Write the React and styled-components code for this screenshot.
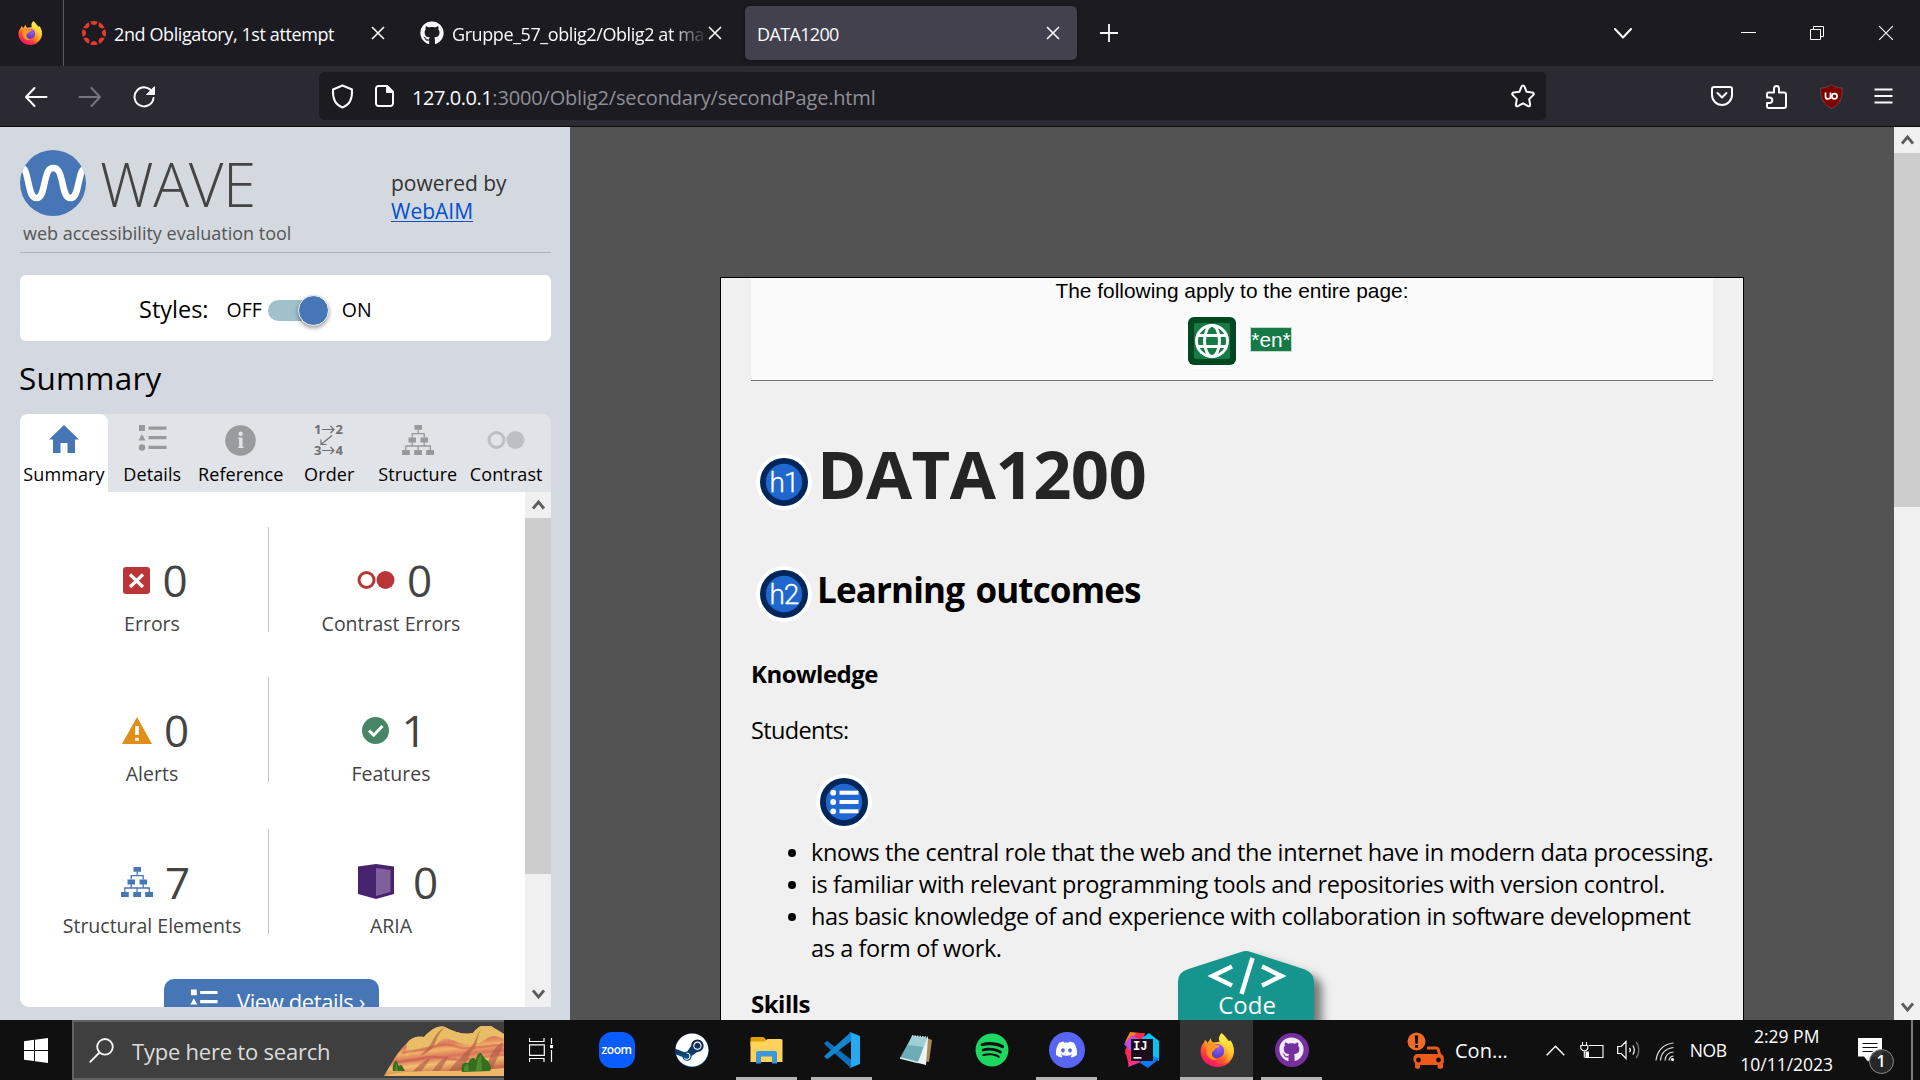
import React from 'react';
import styled, { createGlobalStyle, css } from 'styled-components';
import { FaGithub, FaDiscord, FaSteam, FaSpotify } from 'react-icons/fa';

const Global = createGlobalStyle`
  * { box-sizing: border-box; }
  body { margin: 0; overflow: hidden; font-family: "Open Sans", "Noto Sans", sans-serif; }
  svg { display: block; flex: none; }
`;

const Screen = styled.div`
  width: 1920px;
  height: 1080px;
  display: flex;
  flex-direction: column;
  overflow: hidden;
`;

const Label = styled.span`
  font-size: ${p => p.$size || 18}px;
  letter-spacing: ${p => p.$track || 0}px;
  white-space: nowrap;
`;

/* ---------- Tab strip ---------- */
const TabStrip = styled.div`
  height: 66px;
  background: #1c1b22;
  display: flex;
  align-items: center;
  color: #fbfbfe;
`;
const PinnedTab = styled.div`
  width: 64px;
  height: 66px;
  padding-left: 18px;
  display: flex;
  align-items: center;
  border-right: 1px solid #5b5b64;
`;
const BrowserTab = styled.div`
  width: ${p => p.$width}px;
  height: 54px;
  padding: 0 ${p => p.$right}px 0 ${p => p.$left}px;
  margin-right: ${p => p.$after || 0}px;
  display: flex;
  align-items: center;
  border-radius: 5px;
  ${p => p.$active && css`
    background: #42414d;
    box-shadow: 0 0 4px rgba(0, 0, 0, 0.4);
  `}
`;
const TabTitle = styled(Label)`
  flex: 1;
  margin-left: ${p => p.$indent || 0}px;
  padding-top: 1px;
  ${p => p.$fade && css`
    mask-image: linear-gradient(to right, #000 218px, transparent 256px);
  `}
`;
const NewTab = styled.div`
  margin-left: 23px;
`;
const WindowControls = styled.div`
  margin-left: auto;
  padding-right: 26px;
  display: flex;
  align-items: center;
`;
const ControlSlot = styled.div`
  margin-right: ${p => p.$gap}px;
`;

/* ---------- Navigation bar ---------- */
const NavBar = styled.div`
  height: 61px;
  background: #2b2a33;
  border-bottom: 1px solid #0c0c0d;
  display: flex;
  align-items: center;
  padding: 0 27px 0 24px;
`;
const NavButtons = styled.div`
  width: 296px;
  padding-top: 1px;
  display: flex;
  gap: 30px;
`;
const UrlField = styled.div`
  width: 1227px;
  height: 48px;
  margin-left: -1px;
  border-radius: 5px;
  background: #1c1b22;
  display: flex;
  align-items: center;
  padding: 0 11px 0 12px;
  color: #8f8f98;
`;
const UrlIcons = styled.div`
  display: flex;
  align-items: center;
  gap: 21px;
  width: 81px;
`;
const UrlText = styled(Label)`
  flex: 1;
  padding-top: 2px;
`;
const UrlHost = styled.span`
  color: #fbfbfe;
  letter-spacing: -0.45px;
`;
const Extensions = styled.div`
  flex: 1;
  display: flex;
  align-items: center;
  justify-content: space-between;
  padding-left: 164px;
`;

/* ---------- Content ---------- */
const Content = styled.div`
  height: 893px;
  display: flex;
  position: relative;
  background: #535353;
  overflow: hidden;
`;
const Sidebar = styled.aside`
  width: 570px;
  padding: 0 19px 13px 20px;
  background: #d4d8e0;
`;
const WaveHeader = styled.header`
  height: 126px;
  border-bottom: 1px solid #aeb4b8;
  display: flex;
  background: #d4d9e0;
`;
const Brand = styled.div`
  width: 371px;
  padding-top: 23px;
`;
const BrandRow = styled.div`
  display: flex;
  height: 66px;
  gap: 13px;
`;
const BrandName = styled.div`
  font-size: 60px;
  font-weight: 300;
  line-height: 68px;
  letter-spacing: -0.4px;
  color: #444;
`;
const Tagline = styled.div`
  margin: 5px 0 0 3px;
  font-size: 18px;
  line-height: 24px;
  color: #555;
`;
const PoweredBy = styled.div`
  padding-top: 42px;
  font-size: 21px;
  line-height: 28px;
  color: #333;
`;
const BlueLink = styled.div`
  color: #0050d0;
  text-decoration: underline;
  text-decoration-thickness: 1px;
  text-underline-offset: 2px;
`;
const StylesBox = styled.div`
  margin-top: 22px;
  height: 66px;
  border-radius: 6px;
  background: #fff;
  display: flex;
  align-items: center;
  padding: 2px 0 0 119px;
`;
const SwitchLabel = styled(Label)`
  margin-left: ${p => p.$before}px;
  padding-top: 1px;
`;
const Track = styled.div`
  width: 58px;
  height: 21px;
  margin: 2px 0 0 6px;
  border-radius: 11px;
  background: #a0c1cb;
  display: flex;
  justify-content: flex-end;
  align-items: center;
`;
const Knob = styled.div`
  flex: none;
  width: 31px;
  height: 31px;
  margin-right: -3px;
  border-radius: 50%;
  background: #4776b6;
  border: 1px solid #f4f4f4;
  box-shadow: 0 2px 4px rgba(0, 0, 0, 0.4);
`;
const SectionTitle = styled.h2`
  margin: 17px 0 16px -1px;
  font-size: 31.5px;
  font-weight: 400;
  line-height: 40px;
  letter-spacing: 0.2px;
`;
const Tabs = styled.div`
  height: 78px;
  display: grid;
  grid-template-columns: 88px repeat(5, 88.5px);
  background: #e0e3e7;
  border-radius: 9px 9px 0 0;
`;
const PanelTab = styled.div`
  padding-top: 10px;
  display: flex;
  flex-direction: column;
  align-items: center;
  font-size: 18px;
  line-height: 24px;
  letter-spacing: 0.1px;
  border-radius: 8px 8px 0 0;
  background: ${p => (p.$active ? '#fff' : 'transparent')};
`;
const TabIcon = styled.div`
  height: 32px;
  margin-bottom: 6px;
  padding-bottom: ${p => p.$lift || 0}px;
  display: flex;
  align-items: center;
`;
const SummaryBody = styled.div`
  height: 515px;
  display: flex;
  background: #fff;
  border-radius: 0 0 0 9px;
  overflow: hidden;
`;
const Counts = styled.div`
  flex: 1;
  height: 515px;
  overflow: hidden;
  padding-top: 35px;
  color: #444;
`;
const CountRow = styled.div`
  height: 105px;
  margin-bottom: ${p => p.$after}px;
  display: grid;
  grid-template-columns: 249px 244px;
`;
const CountCell = styled.div`
  height: 105px;
  padding: 23px 0 0 ${p => (p.$first ? 16 : 0)}px;
  border-right: ${p => (p.$first ? '1px solid #c4c4c4' : 'none')};
  display: flex;
  flex-direction: column;
  align-items: center;
`;
const CountValue = styled.div`
  height: 60px;
  flex: none;
  padding-left: ${p => (p.$gap ? 14 : 7)}px;
  display: flex;
  align-items: center;
  gap: ${p => p.$gap || 12}px;
  font-size: 44px;
  line-height: 60px;
`;
const CountLabel = styled.div`
  font-size: 19.5px;
  line-height: 28px;
  white-space: nowrap;
`;
const DetailsButton = styled.button`
  display: flex;
  align-items: flex-start;
  width: 215px;
  height: 56px;
  margin: -1px 0 0 144px;
  padding: 8px 0 0 26px;
  gap: 19px;
  border: 0;
  border-radius: 10px;
  background: #4776b6;
  color: #fff;
  font: 22px/28px "Open Sans", "Noto Sans", sans-serif;
  letter-spacing: -0.4px;
  white-space: nowrap;
`;

/* ---------- Scroll bars ---------- */
const ScrollBar = styled.div`
  width: 26px;
  flex: none;
  display: flex;
  flex-direction: column;
  align-items: center;
  background: #f0f0f0;
`;
const ScrollArrow = styled.div`
  height: 26px;
  flex: none;
  padding-bottom: 2px;
  display: flex;
  align-items: center;
`;
const ScrollThumb = styled.div`
  width: 26px;
  height: ${p => p.$height}px;
  margin-bottom: auto;
  background: #cdcdcd;
`;

/* ---------- Inspected page ---------- */
const Viewport = styled.main`
  flex: 1;
  padding: 150px 0 0 150px;
  overflow: hidden;
`;
const Page = styled.article`
  width: 1024px;
  height: 760px;
  padding: 0 30px;
  border: 1px solid #000;
  background: #f0f0f0;
  color: #000;
`;
const Banner = styled.div`
  height: 103px;
  padding-top: 1px;
  border-bottom: 1px solid #707a73;
  background: #fafafa;
  font: 20.9px/24px "Liberation Sans", Arial, sans-serif;
  text-align: center;
`;
const BannerIcons = styled.div`
  height: 76px;
  padding-left: 11px;
  display: flex;
  align-items: center;
  justify-content: center;
  gap: 9px;
`;
const LangTag = styled.span`
  height: 25px;
  margin-bottom: 4px;
  border: 1px solid #c9d6cf;
  background: #167a46;
  color: #fff;
  line-height: 24px;
`;
const HeadingRow = styled.div`
  display: flex;
  align-items: flex-start;
  height: ${p => p.$height}px;
  margin-top: ${p => p.$top}px;
  padding-left: 4px;
`;
const HeadingBadge = styled.div`
  padding-top: ${p => p.$drop}px;
  margin-right: ${p => p.$gap}px;
`;
const PageTitle = styled.h1`
  margin: 0;
  font-size: 67px;
  line-height: 91px;
  letter-spacing: -0.6px;
  color: #252525;
`;
const PageSubtitle = styled.h2`
  margin: 0;
  font-size: 35px;
  line-height: 52px;
  letter-spacing: -0.85px;
  word-spacing: 3px;
`;
const Heading3 = styled.h3`
  margin: ${p => p.$top}px 0 0;
  font-size: 24px;
  line-height: 32px;
  letter-spacing: -0.5px;
`;
const Paragraph = styled.p`
  margin: 24px 0 27px;
  font-size: 23.5px;
  line-height: 32px;
  letter-spacing: -0.65px;
`;
const ListBadge = styled.div`
  padding: 0 0 5px 64px;
`;
const List = styled.ul`
  margin: 0;
  padding-left: 60px;
  font-size: 23.5px;
  line-height: 32px;
  letter-spacing: -0.39px;
  white-space: nowrap;
`;
const CodeButton = styled.div`
  position: absolute;
  left: 1168px;
  bottom: 0;
  width: 170px;
  height: 72px;
  overflow: hidden;
`;

/* ---------- Task bar ---------- */
const TaskBar = styled.footer`
  height: 60px;
  display: flex;
  background: #101010;
  color: #fff;
`;
const StartButton = styled.div`
  width: 72px;
  padding-left: 24px;
  display: flex;
  align-items: center;
`;
const SearchBox = styled.div`
  width: 432px;
  height: 60px;
  border: 2px solid #626262;
  border-right-width: 0;
  background: #3f3f3f;
  display: flex;
  align-items: center;
  padding-left: 15px;
  gap: 18px;
  color: #dcdcdc;
`;
const SearchText = styled(Label)`
  padding-top: 2px;
`;
const SearchArt = styled.div`
  margin: 2px 0 0 auto;
`;
const TaskSlot = styled.div`
  width: 75px;
  height: 60px;
  display: flex;
  align-items: center;
  justify-content: center;
`;
const TaskIcon = styled.div`
  width: ${p => (p.$active ? 73 : 61)}px;
  height: 60px;
  display: flex;
  align-items: center;
  justify-content: center;
  border: solid transparent;
  border-width: 3px 0;
  padding-bottom: 1px;
  background: ${p => (p.$active ? '#343434' : 'none')};
  border-bottom-color: ${p => (p.$open ? '#b5b3b5' : 'transparent')};
`;
const Disc = styled.div`
  width: ${p => p.$size}px;
  height: ${p => p.$size}px;
  border-radius: ${p => p.$radius || '50%'};
  background: ${p => p.$fill};
  color: ${p => p.$color || '#fff'};
  display: flex;
  align-items: center;
  justify-content: center;
  font-size: 12px;
  font-weight: 600;
  letter-spacing: -0.4px;
`;
const Tray = styled.div`
  flex: 1;
  display: flex;
  align-items: center;
  padding-left: 78px;
`;
const TrayItem = styled.div`
  margin-left: ${p => p.$gap}px;
  padding-top: ${p => p.$drop || 0}px;
`;
const Clock = styled.div`
  width: 94px;
  margin-left: 13px;
  text-align: center;
  font-size: 17.5px;
  line-height: 28px;
  white-space: nowrap;
`;
const Notification = styled.div`
  position: relative;
  margin: 0 0 0 24px;
  width: 36px;
  height: 42px;
  padding-top: 9px;
`;
const NoteCount = styled.div`
  position: absolute;
  left: 11px;
  top: 20px;
  width: 25px;
  height: 25px;
  border: 1px solid #8a8a8a;
  border-radius: 50%;
  background: rgba(40, 40, 40, 0.92);
  text-align: center;
  font-size: 16px;
  font-weight: 600;
  line-height: 23px;
`;
const ShowDesktop = styled.div`
  width: 9px;
  height: 60px;
  margin-left: auto;
  border-left: 2px solid #7a7a7a;
`;

/* ---------- Icons ---------- */
function Firefox({ size, id }) {
  return (
    <svg width={size} height={size} viewBox="0 0 34 34">
      <defs>
        <linearGradient id={id + 'a'} x1="0.85" y1="0.05" x2="0.2" y2="0.95">
          <stop offset="0" stopColor="#fff44f" />
          <stop offset="0.35" stopColor="#ffb02e" />
          <stop offset="0.62" stopColor="#ff5a2c" />
          <stop offset="0.85" stopColor="#ff2157" />
          <stop offset="1" stopColor="#e5127f" />
        </linearGradient>
        <radialGradient id={id + 'b'} cx="0.6" cy="0.25" r="0.8">
          <stop offset="0" stopColor="#a15cf5" />
          <stop offset="0.6" stopColor="#6b47d8" />
          <stop offset="1" stopColor="#4a3cb8" />
        </radialGradient>
        <linearGradient id={id + 'c'} x1="0.7" y1="0" x2="0.6" y2="1">
          <stop offset="0" stopColor="#fff44f" />
          <stop offset="0.6" stopColor="#ffcc33" />
          <stop offset="1" stopColor="#ff8a1f" />
        </linearGradient>
      </defs>
      <path fill={'url(#' + id + 'a)'} d="M5 7c1 .7 2 1.800 2.500 3L11 5c0 2.200.5 3.500 2 4.500l8-1c2 1 3 2 3.500 3.500l5-4.500C32 10 34 14 34 18.500 33.500 27.500 26.500 34 17.500 34 8 34 .5 27 .5 18.500c0-4 1.500-7 3.500-9z" />
      <path fill={'url(#' + id + 'c)'} d="M21.500 0c4 3 5.500 6 7.500 8.500 1-.2 1.300-.8 1.300-1.500C33 10.500 34 15 33.500 19 32.500 25.500 28 29.500 23 30c5-3 6.500-8 5-13-1-3.500-5-6-8-8-2-2.500-1-6 1.500-9z" />
      <circle cx="17.200" cy="18" r="7" fill={'url(#' + id + 'b)'} />
      <path fill="#ff9422" d="M7 11c3-1.500 5.500-1.300 8 .5l4.300.8c.5 1.500-1.300 2.500-3.800 3.200 0 1.500-2.500 2-3.500 4-.5 4 2 6.500 6 7-6 2-11-2-11.500-7.500C6.300 16 5.800 13 7 11z" />
    </svg>
  );
}
const Cross = ({ size = 14, w = 1.600, color = '#fbfbfe' }) => (
  <svg width={size} height={size} viewBox="0 0 14 14" stroke={color} strokeWidth={w}>
    <path d="M1 1l12 12M13 1L1 13" />
  </svg>
);
const CanvasLogo = () => (
  <svg width="24" height="24" viewBox="-12 -12 24 24" fill="#e33b2e">
    {[0, 45, 90, 135, 180, 225, 270, 315].map(a => (
      <path key={a} transform={'rotate(' + a + ')'} d="M-3.700-11.400A12 12 0 0 1 3.700-11.400C2.800-6.700-2.800-6.700-3.700-11.400z" />
    ))}
  </svg>
);
const ScrollChevron = ({ down }) => (
  <svg width="13" height="11" viewBox="0 0 13 11" fill="none" stroke="#5c5c5c" strokeWidth="2.800">
    <path d={down ? 'M1 2.500l5.500 6.500L12 2.500' : 'M1 9.500L6.500 3 12 9.500'} />
  </svg>
);
const ListIcon = ({ color, width = 29, height = 28 }) => (
  <svg width={width} height={height} viewBox="0 0 29 28" fill={color}>
    <path d="M1 1h6v6H1zM4 10l3.500 6.500h-7z" />
    <circle cx="4" cy="23.500" r="3.200" />
    <path d="M10.500 2.500h18v3.200h-18zM10.500 12h18v3.200h-18zM10.500 21.800h18V25h-18z" />
  </svg>
);
const StructureIcon = ({ color }) => (
  <svg width="32" height="30" viewBox="0 0 32 30" fill={color}>
    <path d="M12.500 0h7.500v4.800h-7.500zM6.500 12.500H14v5H6.500zM18.500 12.500H26v5h-7.500zM0 25h7.800v5H0zM12.200 25H20v5h-7.800zM24.200 25H32v5h-7.800z" />
    <path fill="none" stroke={color} strokeWidth="1.300" d="M16.200 4.500v4.200M10.200 12.500V8.700h12v3.800M10.200 17v4M22.200 17v4M3.800 25v-4h24.500v4M16.100 25v-4" />
  </svg>
);
const ContrastIcon = ({ color }) => (
  <svg width="38" height="20" viewBox="0 0 38 20">
    <circle cx="9.500" cy="10" r="7.500" fill="none" stroke={color} strokeWidth="3" />
    <circle cx="28.500" cy="10" r="9" fill={color} />
  </svg>
);
const HomeIcon = () => (
  <svg width="30" height="30" viewBox="0 0 30 30" fill="#4776b6">
    <path d="M15 1l15 14.500h-4V29h-7.500V19h-7v10H4V15.500H0z" />
  </svg>
);
const InfoIcon = () => (
  <svg width="31" height="31" viewBox="0 0 31 31">
    <circle cx="15.500" cy="15.500" r="15.300" fill="#999b9e" />
    <circle cx="15.700" cy="8.800" r="2.200" fill="#e0e3e7" />
    <path fill="#e0e3e7" d="M13.200 12.500h4.300v9.200h1.200V23h-5.500v-1.300h.9v-7.800h-.9z" />
  </svg>
);
const OrderIcon = () => (
  <svg width="34" height="34" viewBox="-2 -1 34 34" fill="#6f7072">
    <g fontFamily="Open Sans, sans-serif" fontWeight="700" fontSize="13">
      <text x="0" y="10">1</text>
      <text x="21.500" y="10">2</text>
      <text x="0" y="31">3</text>
      <text x="21.500" y="31">4</text>
    </g>
    <path fill="none" stroke="#6f7072" strokeWidth="1.200" d="M8 5.500h12M16.500 2L20 5.500 16.500 9M8 26.500h12M16.500 23L20 26.500 16.500 30M18 11.500L7 20.500M7 15.500v5h5.500" />
  </svg>
);
const ErrorIcon = () => (
  <svg width="27" height="27" viewBox="0 0 27 27">
    <rect width="27" height="27" rx="3" fill="#ba3636" />
    <path d="M7 7.500l13 12.500M20 7.500L7 20" stroke="#fff" strokeWidth="3.200" />
  </svg>
);
const AlertIcon = () => (
  <svg width="30" height="27" viewBox="0 0 30 27">
    <path fill="#e18e18" d="M15 0l15 27H0z" />
    <path fill="#fff" d="M13.200 9h3.600v9h-3.600zM13.200 20.800h3.600v3h-3.600z" />
  </svg>
);
const FeatureIcon = () => (
  <svg width="27" height="27" viewBox="0 0 27 27">
    <circle cx="13.500" cy="13.500" r="13.500" fill="#468667" />
    <path d="M7 13.500l4.700 4.700L20.500 9" fill="none" stroke="#fff" strokeWidth="3" />
  </svg>
);
const AriaIcon = () => (
  <svg width="36" height="37" viewBox="0 0 36 37">
    <path fill="#48236d" d="M0 2.500L18 0l18 2.500V30l-18 5-18-5z" />
    <path fill="#7f5f9c" d="M18 4l14.500 2v22L18 32z" />
  </svg>
);
const WaveLogo = () => (
  <svg width="67" height="66" viewBox="0 0 67 66">
    <clipPath id="wl"><circle cx="33" cy="33" r="33" /></clipPath>
    <circle cx="33" cy="33" r="33" fill="#4776b6" />
    <path clipPath="url(#wl)" fill="none" stroke="#fff" strokeWidth="6.500" d="M-3 19C6 14 6 24 8 31c2 9 3 17 8.500 17S23 40 25 31c2-8 3-13 8.300-13S40 23 42 31c2 9 3 17 8.500 17S57 40 59 31c2-7 2-15 11-12" />
  </svg>
);
const HeadBadgeIcon = ({ text }) => (
  <svg width="58" height="58" viewBox="0 0 58 58">
    <circle cx="29" cy="29" r="28" fill="#fff" />
    <circle cx="29" cy="29" r="24" fill="#00265a" />
    <circle cx="29" cy="29" r="18.200" fill="#2068cf" />
    {text ? (
      <text x="28.800" y="38.800" textAnchor="middle" fontFamily="Roboto, sans-serif" fontWeight="300" fontSize="28" letterSpacing="-1.200" fill="#fff" stroke="#fff" strokeWidth="0.300">{text}</text>
    ) : (
      <g fill="#fff">
        {[19.700, 29, 38.300].map(y => (
          <g key={y}>
            <circle cx="18.200" cy={y} r="2.900" />
            <rect x="24.500" y={y - 2} width="19" height="4" />
          </g>
        ))}
      </g>
    )}
  </svg>
);
const GlobeIcon = () => (
  <svg width="58" height="58" viewBox="0 0 58 58">
    <rect x="1" y="1" width="56" height="56" rx="10" fill="#fff" />
    <rect x="5" y="5" width="48" height="48" rx="6" fill="#00481f" />
    <rect x="11" y="11" width="36" height="36" rx="2" fill="#167a46" />
    <g fill="none" stroke="#fff" strokeWidth="3">
      <circle cx="29" cy="29" r="15.500" />
      <ellipse cx="29" cy="29" rx="7.500" ry="15.500" />
      <path d="M15 23.500h28M15 34.500h28" />
    </g>
  </svg>
);
const CodeBadge = () => (
  <svg width="170" height="72" viewBox="0 0 170 72">
    <defs>
      <filter id="cs" x="-20%" y="-20%" width="150%" height="150%">
        <feDropShadow dx="8" dy="7" stdDeviation="5" floodColor="#000" floodOpacity="0.5" />
      </filter>
    </defs>
    <path filter="url(#cs)" fill="#18958e" d="M73 4q5-1.800 10 0L137 21.500q9 4 9 12v90H10v-90q0-9 9-12z" />
    <path fill="none" stroke="#fff" strokeWidth="4.500" d="M64 18.500L44.500 28 64 37.500M94 18.500L113.500 28 94 37.500M84.500 10L73.500 46" />
    <text x="79" y="66" textAnchor="middle" fontFamily="Open Sans, sans-serif" fontSize="24" fill="#fff">Code</text>
  </svg>
);
const Landscape = () => (
  <svg width="120" height="50" viewBox="0 0 120 50">
    <defs>
      <linearGradient id="ls" x1="0" y1="0" x2="0.250" y2="1">
        <stop offset="0" stopColor="#eebf68" />
        <stop offset="0.3" stopColor="#f0bd6c" />
        <stop offset="0.450" stopColor="#dd7c5c" />
        <stop offset="0.570" stopColor="#f3b268" />
        <stop offset="0.700" stopColor="#d9745a" />
        <stop offset="0.820" stopColor="#f4bf70" />
        <stop offset="1" stopColor="#c96f4b" />
      </linearGradient>
    </defs>
    <path fill="url(#ls)" d="M0 50C7 38 14 25 23 17c5-6 10-7 17-6C47 4 53-1 61 1c9 5 18 8 28 6 7-9 14-10 21-5l10 6v42z" />
    <path fill="#e9bd66" d="M23 17c5-6 10-7 17-6C47 4 53-1 61 1c9 5 18 8 28 6 7-9 14-10 21-5l10 6v5c-8-3-12-5-18 0-8 6-16 7-26 4-9-3-14-8-21-1-6 6-10 4-18 6-6 1-11 4-15 9z" />
    <path fill="#a95746" opacity="0.600" d="M61 1C53 6 51 10 48 16c-3 6-8 9-12 14 10-4 13-8 16-15 2-6 5-10 9-14zM98 3c-6 4-6 14-12 19-4 4-8 7-11 12 8-5 14-8 17-15 2-6 2-12 6-16zM119 16c-8 4-14 14-15 22l5 7c1-12 9-16 10-29zM64 30c-8 4-13 10-17 18h8c3-8 7-11 9-18zM86 27c-9 4-17 10-22 20h12c4-9 9-11 10-20zM46 32c-8 4-14 9-18 15h8c4-6 8-9 10-15z" />
    <path fill="none" stroke="#c65a50" strokeWidth="2.500" opacity="0.500" d="M18 27c14-4 18-1 28-5s18-5 28-1 24-2 46-2M11 36c12 0 22-3 34-5s22 4 36 3 24-5 39-5" />
    <path fill="#f1b86a" d="M0 50c15-5 40-5 60-5s42-1 60-3v8z" />
    <path fill="#356e1f" d="M9 45c-1-5 1-8 3-11 2 3 2 5 3 6 2-2 3-1 6 5zM78 46c-2-9 3-10 6-9 3-6 6-6 8-3 1-6 3-7 5-7 4 6 4 6 7 8 3 5 4 7 2 10z" />
    <path fill="#5d9a35" opacity="0.700" d="M80 45c0-5 2-7 4-7l1 7zM92 45c1-9 2-14 5-16l1 15zM12 36l2 9h-3z" />
  </svg>
);

const NAV_STROKE = { fill: 'none', stroke: '#fbfbfe', strokeWidth: 2, strokeLinecap: 'round', strokeLinejoin: 'round' };

const tabs = [
  ['Summary', <HomeIcon />, 3],
  ['Details', <ListIcon color="#97999c" />, 4],
  ['Reference', <InfoIcon />],
  ['Order', <OrderIcon />],
  ['Structure', <StructureIcon color="#97999c" />],
  ['Contrast', <ContrastIcon color="#bcbfc3" />],
];
const counts = [
  [['Errors', 0, <ErrorIcon />], ['Contrast Errors', 0, <ContrastIcon color="#ba3636" />]],
  [['Alerts', 0, <AlertIcon />], ['Features', 1, <FeatureIcon />]],
  [['Structural Elements', 7, <StructureIcon color="#4776b6" />], ['ARIA', 0, <AriaIcon />, 19]],
];
const rowGaps = [45, 47, 46];

const TaskView = () => (
  <svg width="25" height="24" viewBox="0 0 25 24" fill="none" stroke="#fff" strokeWidth="1.200">
    <path d="M.5 0v3.500H15V0M.5 6.800h14.800v10.500H.5zM.5 24v-3.500H15V24M22.500 0v6M22.500 12v12" />
    <path fill="#fff" stroke="none" d="M21 7h3v3.200h-3z" />
  </svg>
);
const Explorer = () => (
  <svg width="33" height="28" viewBox="0 0 33 28">
    <path fill="#e0a100" d="M.5 2.500Q.5 1 2 1h11.500l3 3H32v6H.5z" />
    <path fill="#ffd25c" d="M.5 5.500h14l3-2.500H31q1.500 0 1.500 1.500V26H.5z" />
    <path fill="#3a96dd" d="M6 27.500V17q0-2 2-2h17q2 0 2 2v10.500h-5V20.500H11v7z" />
  </svg>
);
const VsCode = () => (
  <svg width="36" height="36" viewBox="0 0 36 36">
    <path fill="#0e70b8" d="M0 11.500l3-2.700 24 18.700V36L2 13.700z" />
    <path fill="#1287d0" d="M0 24.500L3.200 27.300 27 9V0L1.500 23z" />
    <path fill="#27a9f1" d="M26 0l10 4v28l-10 4c-1.300 0-2-.5-2-.5 2 1 3-.5 3-1.500V2c0-1-1-2.500-3-1.500z" />
  </svg>
);
const Notepad = () => (
  <svg width="33" height="32" viewBox="0 0 33 32">
    <path fill="#a88b52" d="M27 4l5 2-3 22-5-1z" />
    <path fill="#eef3f4" d="M12 2l16 2-2 27-8-2z" />
    <path fill="#6cadb8" d="M12 2l15 2-9 24L0 24z" />
    <path fill="#b5dde2" d="M12 2l15 2-3 9-16-2z" opacity="0.700" />
    <path stroke="#c7d6d8" strokeWidth="2" strokeDasharray="1.500 1" d="M12 2l16 1.500" />
    <path stroke="#d9eff2" strokeWidth="1.500" d="M0 24l18 4.500" />
  </svg>
);
const Intellij = () => (
  <svg width="36" height="36" viewBox="0 0 36 36">
    <path fill="#fc801d" d="M6 0l11 1 3 16L1 22l4-10-4-2z" />
    <path fill="#fe2857" d="M12 1h9l-4 18L5 35 3 26l-2-8z" />
    <path fill="#c04be0" d="M0 12l8-9 9 5-8 14z" />
    <path fill="#07c3f2" d="M25 1l10 8v20l-10-5-7-18z" />
    <path fill="#087cfa" d="M18 28l10-4 8 2-12 10-8-5z" />
    <path fill="#ff318c" d="M4 35l4-12 9 7z" />
    <path fill="#1b0d1c" d="M7 7h22v22H7z" />
    <text x="9" y="18" fill="#fff" fontFamily="Liberation Mono, monospace" fontWeight="700" fontSize="12">IJ</text>
    <path fill="#fff" d="M9.500 25h8v1.700h-8z" />
  </svg>
);
const tasks = [
  [<TaskView />],
  [<Disc $size={36} $radius="13px" $fill="#0b5cff">zoom</Disc>],
  [<Disc $size={34} $fill="linear-gradient(#161c40, #0e3a68 55%, #0d7cb5)"><FaSteam size={34} /></Disc>],
  [<Explorer />, 'open'],
  [<VsCode />, 'open'],
  [<Notepad />],
  [<Disc $size={32} $fill="#101010" $color="#1ed760"><FaSpotify size={34} /></Disc>],
  [<Disc $size={36} $fill="#5865f2"><FaDiscord size={23} /></Disc>, 'open'],
  [<Intellij />],
  [<Firefox size={34} id="task" />, 'active'],
  [<Disc $size={34} $fill="#762f9f" $color="#f3eef6"><FaGithub size={25} /></Disc>, 'open'],
];

export default function App() {
  return (
    <Screen>
      <Global />
      <TabStrip>
        <PinnedTab><Firefox size={24} id="pin" /></PinnedTab>
        <BrowserTab $width={335} $left={18} $right={14}>
          <CanvasLogo />
          <TabTitle $indent={8} $track={-0.4}>2nd Obligatory, 1st attempt</TabTitle>
          <Cross />
        </BrowserTab>
        <BrowserTab $width={333} $left={21} $right={10} $after={13}>
          <FaGithub size={24} />
          <TabTitle $indent={8} $track={-0.42} $fade>Gruppe_57_oblig2/Oblig2 at ma</TabTitle>
          <Cross />
        </BrowserTab>
        <BrowserTab $width={332} $left={12} $right={17} $active>
          <TabTitle $track={-0.65}>DATA1200</TabTitle>
          <Cross />
        </BrowserTab>
        <NewTab>
          <svg width="18" height="18" viewBox="0 0 18 18" stroke="#fbfbfe" strokeWidth="1.800"><path d="M9 0v18M0 9h18" /></svg>
        </NewTab>
        <WindowControls>
          <ControlSlot $gap={109}>
            <svg width="18" height="11" viewBox="0 0 18 11" {...NAV_STROKE}><path d="M1 1l8 8.500L17 1" /></svg>
          </ControlSlot>
          <ControlSlot $gap={54}>
            <svg width="15" height="2" viewBox="0 0 15 2"><path fill="#fff" d="M0 0h15v1H0z" /></svg>
          </ControlSlot>
          <ControlSlot $gap={54}>
            <svg width="14" height="14" viewBox="0 0 14 14" fill="none" stroke="#fff"><path d="M.5 3.500h10v10H.5zM3.500 3.500v-3h10v10h-3" /></svg>
          </ControlSlot>
          <Cross size={16} w={1} />
        </WindowControls>
      </TabStrip>

      <NavBar>
        <NavButtons>
          <svg width="24" height="22" viewBox="0 0 24 22" {...NAV_STROKE}><path d="M10.500 2L2 11l8.500 9M2 11h20.500" /></svg>
          <svg width="24" height="22" viewBox="0 0 24 22" {...NAV_STROKE} stroke="#77767e"><path d="M13.500 2l8.500 9-8.500 9M22 11H1.500" /></svg>
          <svg width="24" height="22" viewBox="0 0 24 22" {...NAV_STROKE}><path d="M20.500 6.500A9.500 9.500 0 1 0 21.500 12" /><path fill="#fbfbfe" strokeWidth="1" d="M22.500 1v7.500H15z" /></svg>
        </NavButtons>
        <UrlField>
          <UrlIcons>
            <svg width="23" height="25" viewBox="0 0 23 25" {...NAV_STROKE}><path d="M11.500 1.500L2 5.500C1.500 14 4.500 21 11.500 23.500 18.500 21 21.500 14 21 5.500z" /></svg>
            <svg width="19" height="22" viewBox="0 0 19 22" {...NAV_STROKE}><path d="M3.500 1H12l6 6v11.500A2.500 2.500 0 0 1 15.500 21h-12A2.500 2.500 0 0 1 1 18.500v-15A2.500 2.500 0 0 1 3.500 1z" /><path fill="#fbfbfe" d="M12 1v6h6z" /></svg>
          </UrlIcons>
          <UrlText $size={20} $track={-0.17}><UrlHost>127.0.0.1</UrlHost>:3000/Oblig2/secondary/secondPage.html</UrlText>
          <svg width="24" height="24" viewBox="0 0 24 24" {...NAV_STROKE}><path d="M12 1.500c.8 0 1.200.5 1.500 1.200l2 5 5.800.7c1.600.3 2 1.600.9 2.700l-4 4 .9 5.600c.2 1.500-1 2-2 1.400L12 19.300l-5.100 2.800c-1.100.6-2.200 0-2-1.400l.9-5.600-4-4c-1.100-1.100-.7-2.400.9-2.700l5.800-.7 2-5c.3-.7.7-1.200 1.500-1.200z" /></svg>
        </UrlField>
        <Extensions>
          <svg width="24" height="22" viewBox="0 0 24 22" {...NAV_STROKE}><path d="M4 2h16a2 2 0 0 1 2 2v6a10 10 0 0 1-20 0V4a2 2 0 0 1 2-2z" /><path d="M7.500 8l4.500 4.500L16.500 8" /></svg>
          <svg width="23" height="25" viewBox="0 0 23 25" {...NAV_STROKE}><path d="M3.500 8.500H9V4.500a2.500 2.500 0 0 1 5 0v4h5a2 2 0 0 1 2 2V22a2 2 0 0 1-2 2H3.500A1.500 1.500 0 0 1 2 22.500V19h2.500a2.800 2.800 0 0 0 0-5.600H2V10a1.500 1.500 0 0 1 1.500-1.500z" /></svg>
          <svg width="23" height="25" viewBox="0 0 23 25"><path fill="#800000" stroke="#6a5a60" strokeWidth=".7" d="M11.500.5C8.500 2.800 5 4 .7 4c0 9 .8 15.500 10.800 20.500C21.500 19.500 22.300 13 22.300 4 18 4 14.500 2.800 11.500.5z" /><path fill="none" stroke="#fff" strokeWidth="1.700" d="M5.500 8.500v4a2.500 2.500 0 0 0 5 0v-4m0 3.500v3" /><circle cx="14.500" cy="12.200" r="2.600" fill="none" stroke="#fff" strokeWidth="1.700" /></svg>
          <svg width="19" height="16" viewBox="0 0 19 16" stroke="#fbfbfe" strokeWidth="2"><path d="M.5 1.500h18M.5 8h18M.5 14.500h18" /></svg>
        </Extensions>
      </NavBar>

      <Content>
        <Sidebar>
          <WaveHeader>
            <Brand>
              <BrandRow><WaveLogo /><BrandName>WAVE</BrandName></BrandRow>
              <Tagline>web accessibility evaluation tool</Tagline>
            </Brand>
            <PoweredBy>powered by<BlueLink>WebAIM</BlueLink></PoweredBy>
          </WaveHeader>
          <StylesBox>
            <Label $size={23.5}>Styles:</Label>
            <SwitchLabel $size={19.5} $before={18}>OFF</SwitchLabel>
            <Track><Knob /></Track>
            <SwitchLabel $size={19.5} $before={16}>ON</SwitchLabel>
          </StylesBox>
          <SectionTitle>Summary</SectionTitle>
          <Tabs>
            {tabs.map(([name, icon, lift], i) => (
              <PanelTab key={name} $active={i === 0}><TabIcon $lift={lift}>{icon}</TabIcon>{name}</PanelTab>
            ))}
          </Tabs>
          <SummaryBody>
            <Counts>
              {counts.map((row, r) => (
                <CountRow key={r} $after={rowGaps[r]}>
                  {row.map(([name, value, icon, gap], c) => (
                    <CountCell key={name} $first={c === 0}>
                      <CountValue $gap={gap}>{icon}{value}</CountValue>
                      <CountLabel>{name}</CountLabel>
                    </CountCell>
                  ))}
                </CountRow>
              ))}
              <DetailsButton><ListIcon color="#fff" width={28} height={30} />View details ›</DetailsButton>
            </Counts>
            <ScrollBar>
              <ScrollArrow><ScrollChevron /></ScrollArrow>
              <ScrollThumb $height={356} />
              <ScrollArrow><ScrollChevron down /></ScrollArrow>
            </ScrollBar>
          </SummaryBody>
        </Sidebar>
        <Viewport>
          <Page>
            <Banner>
              The following apply to the entire page:
              <BannerIcons><GlobeIcon /><LangTag>*en*</LangTag></BannerIcons>
            </Banner>
            <HeadingRow $top={47} $height={90}>
              <HeadingBadge $drop={25} $gap={4}><HeadBadgeIcon text="h1" /></HeadingBadge>
              <PageTitle>DATA1200</PageTitle>
            </HeadingRow>
            <HeadingRow $top={46} $height={58}>
              <HeadingBadge $drop={1} $gap={4}><HeadBadgeIcon text="h2" /></HeadingBadge>
              <PageSubtitle>Learning outcomes</PageSubtitle>
            </HeadingRow>
            <Heading3 $top={36}>Knowledge</Heading3>
            <Paragraph>Students:</Paragraph>
            <ListBadge><HeadBadgeIcon /></ListBadge>
            <List>
              <li>knows the central role that the web and the internet have in modern data processing.</li>
              <li>is familiar with relevant programming tools and repositories with version control.</li>
              <li>has basic knowledge of and experience with collaboration in software development<br />as a form of work.</li>
            </List>
            <Heading3 $top={24}>Skills</Heading3>
          </Page>
        </Viewport>
        <ScrollBar>
          <ScrollArrow><ScrollChevron /></ScrollArrow>
          <ScrollThumb $height={354} />
          <ScrollArrow><ScrollChevron down /></ScrollArrow>
        </ScrollBar>
        <CodeButton><CodeBadge /></CodeButton>
      </Content>

      <TaskBar>
        <StartButton>
          <svg width="24" height="25" viewBox="0 0 24 25" fill="#fff"><path d="M0 3.300L10 1.800v10.100H0zM11 1.700L24 0v11.900H11zM0 12.900h10V23L0 21.700zM11 12.900h13V25l-13-1.800z" /></svg>
        </StartButton>
        <SearchBox>
          <svg width="25" height="25" viewBox="0 0 25 25" fill="none" stroke="#f5f5f5" strokeWidth="1.800"><circle cx="16" cy="8.800" r="7.800" /><path d="M10.500 14.500L.7 24.300" /></svg>
          <SearchText $size={22} $track={-0.22}>Type here to search</SearchText>
          <SearchArt><Landscape /></SearchArt>
        </SearchBox>
        {tasks.map(([icon, state], i) => (
          <TaskSlot key={i}>
            <TaskIcon $open={!!state} $active={state === 'active'}>{icon}</TaskIcon>
          </TaskSlot>
        ))}
        <Tray>
          <TrayItem $gap={0}>
            <svg width="37" height="37" viewBox="0 0 37 37">
              <circle cx="9.500" cy="9.500" r="9" fill="#f26a28" />
              <path fill="#101010" d="M7.800 3.500h3.400l-.5 8.200H8.300zM8 13h3v2.800H8z" />
              <path fill="#ec5a1c" d="M20 14.500h9c2 0 3.200 1 3.700 2.800L34 22c2 .8 2.800 2.500 2.800 4.500V31h-.8v4c0 1.200-.7 1.700-1.700 1.700h-2c-1 0-1.700-.5-1.700-1.700v-2H13v2c0 1.200-.7 1.700-1.700 1.700h-1.500C8.700 36.700 8 36.200 8 35v-4.200c-1.300-1-1.600-2-1.600-4 0-3 1.600-4.800 4.600-4.800h20l-1.300-4.500H20z" />
              <circle cx="11.500" cy="28" r="2.400" fill="#101010" /><circle cx="31.500" cy="28" r="2.400" fill="#101010" />
            </svg>
          </TrayItem>
          <TrayItem $gap={11} $drop={1}><Label $size={20}>Con...</Label></TrayItem>
          <TrayItem $gap={38}>
            <svg width="19" height="11" viewBox="0 0 19 11" fill="none" stroke="#fff" strokeWidth="1.500"><path d="M.7 10.300l8.800-9 8.800 9" /></svg>
          </TrayItem>
          <TrayItem $gap={15}>
            <svg width="24" height="18" viewBox="0 0 24 18" fill="none" stroke="#fff" strokeWidth="1.100"><path d="M9 4.500h14v12H5M2.500 1v3M6.500 1v3M.8 4.500h7v3.200l-2 2H3l-2.200-2zM4.300 10v6.500" /><path fill="#fff" stroke="none" d="M5.500 10.500H9v6H5.500z" /></svg>
          </TrayItem>
          <TrayItem $gap={13}>
            <svg width="23" height="20" viewBox="0 0 23 20" fill="none" stroke="#fff" strokeWidth="1.200"><path d="M.7 6.500h3.500L9 1.500v17l-4.800-5H.7zM12.500 8c1 1.200 1 3 0 4.200M15.800 5.500c2 2.500 2 6.500 0 9" /><path stroke="#777" d="M19 2c3.700 4 3.700 12 0 16" /></svg>
          </TrayItem>
          <TrayItem $gap={15} $drop={3}>
            <svg width="20" height="20" viewBox="0 0 20 20" fill="none" stroke="#ddd" strokeWidth="1.200"><path d="M1 18.500C2 9 8 2 18.500 1M5.500 18.500c.5-7 5-12 13-13M10 18.500c.3-4.500 3-8 8.500-8.500M14 18.500c.3-2 1.500-4 4.500-4.500" /><circle cx="17.500" cy="17.500" r="1.600" fill="#fff" stroke="none" /></svg>
          </TrayItem>
          <TrayItem $gap={15}><Label $size={17.5} $track={-0.36}>NOB</Label></TrayItem>
          <Clock>2:29 PM<br />10/11/2023</Clock>
          <Notification>
            <svg width="24" height="24" viewBox="0 0 24 24"><path fill="#fff" d="M0 0h24v18.500H14.500L10 23.500l-4-5H0z" /><path stroke="#101010" strokeWidth="1.200" d="M4.500 5.500h15M4.500 9.500h15M4.500 13.500h10" /></svg>
            <NoteCount>1</NoteCount>
          </Notification>
          <ShowDesktop />
        </Tray>
      </TaskBar>
    </Screen>
  );
}
